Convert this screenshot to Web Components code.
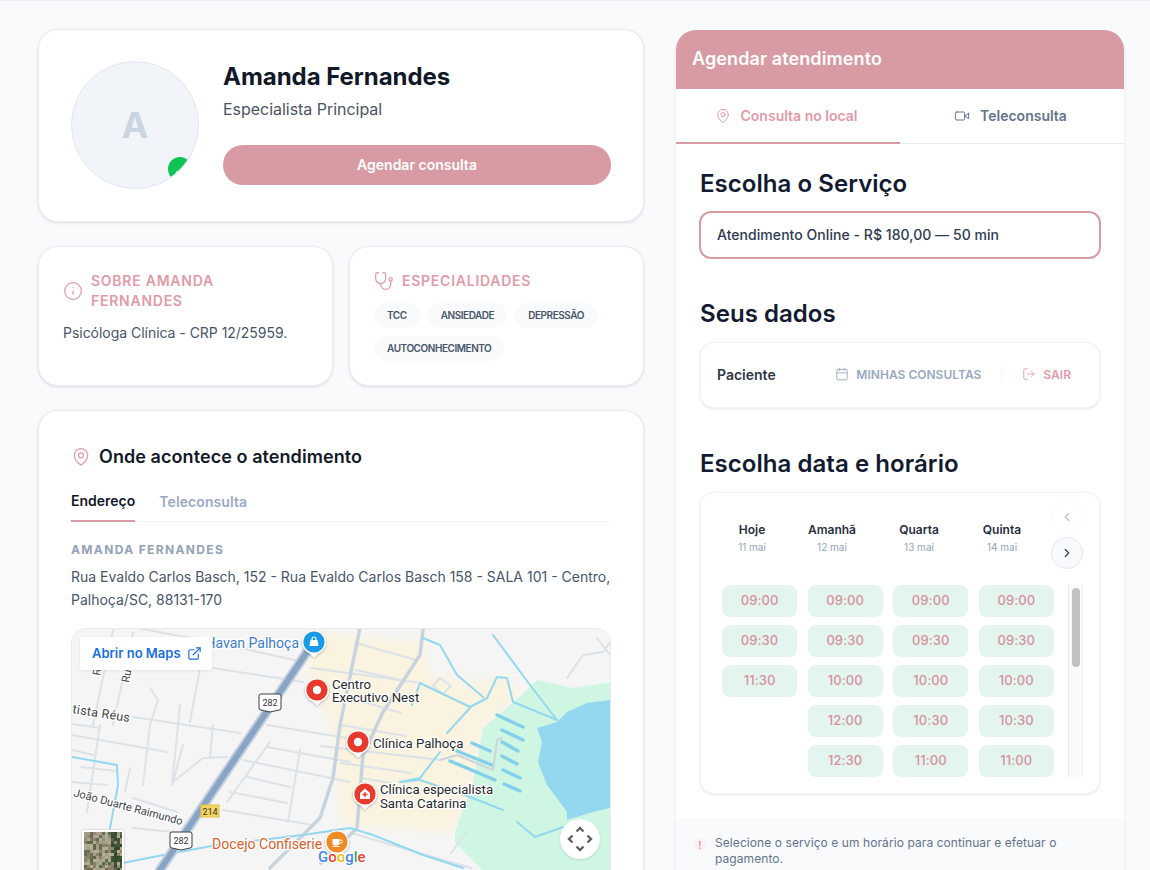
<!DOCTYPE html>
<html lang="pt-BR">
<head>
<meta charset="utf-8">
<title>Amanda Fernandes</title>
<style>
html,body{margin:0;height:870px;overflow:hidden;background:#f8fafc}
body{font-family:Inter,"Liberation Sans",sans-serif;color:#0f172a}
</style>
</head>
<body>
<booking-page>
  <profile-card slot="left" name="Amanda Fernandes" role="Especialista Principal" cta="Agendar consulta"></profile-card>
  <div slot="left" class="row" style="display:grid;grid-template-columns:295px 295px;gap:16px">
    <info-card icon="info" heading="Sobre Amanda Fernandes"><span style="display:block;margin-top:1px;font-size:14px;line-height:20px;color:#475569;letter-spacing:-.03px">Psicóloga Clínica - CRP 12/25959.</span></info-card>
    <info-card icon="stethoscope" heading="Especialidades">
      <tag-list>
        <tag-chip>TCC</tag-chip><tag-chip>ANSIEDADE</tag-chip><tag-chip>DEPRESSÃO</tag-chip><tag-chip>AUTOCONHECIMENTO</tag-chip>
      </tag-list>
    </info-card>
  </div>
  <location-card slot="left"></location-card>
  <schedule-panel slot="right"></schedule-panel>
</booking-page>

<script>
const ICONS={
 pin:'<path d="M20 10c0 6-8 12-8 12s-8-6-8-12a8 8 0 0 1 16 0Z"/><circle cx="12" cy="10" r="3"/>',
 info:'<circle cx="12" cy="12" r="10"/><path d="M12 16v-4"/><path d="M12 8h.01"/>',
 stethoscope:'<path d="M4.8 2.3A.3.3 0 1 0 5 2H4a2 2 0 0 0-2 2v5a6 6 0 0 0 6 6 6 6 0 0 0 6-6V4a2 2 0 0 0-2-2h-1a.2.2 0 1 0 .3.3"/><path d="M8 15v1a6 6 0 0 0 6 6 6 6 0 0 0 6-6v-4"/><circle cx="20" cy="10" r="2"/>',
 video:'<path d="m22 8-6 4 6 4V8Z"/><rect x="2" y="6" width="14" height="12" rx="2"/>',
 calendar:'<rect x="3" y="4" width="18" height="18" rx="2"/><path d="M16 2v4M8 2v4M3 10h18"/>',
 logout:'<path d="M9 21H5a2 2 0 0 1-2-2V5a2 2 0 0 1 2-2h4"/><path d="m16 17 5-5-5-5"/><path d="M21 12H9"/>',
 external:'<path d="M18 13v6a2 2 0 0 1-2 2H5a2 2 0 0 1-2-2V8a2 2 0 0 1 2-2h6"/><path d="M15 3h6v6"/><path d="M10 14 21 3"/>',
 left:'<path d="m15 18-6-6 6-6"/>',
 right:'<path d="m9 18 6-6-6-6"/>'
};
class Base extends HTMLElement{
  constructor(){super();this.attachShadow({mode:'open'});}
  render(html){this.shadowRoot.innerHTML=html;}
}
class UiIcon extends Base{
  connectedCallback(){
    const s=this.getAttribute('size')||16,w=this.getAttribute('stroke')||2;
    this.render(`<style>:host{display:inline-flex;flex:none;width:${s}px;height:${s}px}svg{display:block}</style>
    <svg xmlns="http://www.w3.org/2000/svg" width="${s}" height="${s}" viewBox="0 0 24 24" fill="none" stroke="currentColor" stroke-width="${w}" stroke-linecap="round" stroke-linejoin="round">${ICONS[this.getAttribute('name')]}</svg>`);
  }
}
customElements.define('ui-icon',UiIcon);

class BookingPage extends Base{
  connectedCallback(){this.render(`<style>
   :host{display:block;height:870px;box-sizing:border-box;border-top:1px solid #eef1f5;overflow:hidden}
   .grid{display:grid;grid-template-columns:606px 448px;gap:32px;padding:28px 26px 0 38px;align-items:start}
   .col{display:flex;flex-direction:column;gap:24px;min-width:0}
   .col.r{padding-top:1px}
  </style><div class="grid"><div class="col"><slot name="left"></slot></div><div class="col r"><slot name="right"></slot></div></div>`);}
}
customElements.define('booking-page',BookingPage);

const CARD=`border:1px solid #e9edf2;border-radius:20px;background:#fff;box-shadow:0 1px 3px rgba(15,23,42,.12);box-sizing:border-box;`;
class ProfileCard extends Base{
  connectedCallback(){
    const a=n=>this.getAttribute(n);
    this.render(`<style>
    :host{display:block;${CARD}padding:31px 32px 0;height:193px}
    .wrap{display:flex;gap:24px}
    .avatar{position:relative;width:128px;height:128px;border-radius:50%;background:#f1f5f9;border:1px solid #e2e8f0;box-sizing:border-box;overflow:hidden;display:flex;align-items:center;justify-content:center;font-size:36px;font-weight:700;color:#cbd5e1;flex:none}
    .dot{position:absolute;left:96px;top:95px;width:24px;height:24px;border-radius:50%;background:#0fc455}
    .dot i{position:absolute;left:8px;top:14px;width:2px;height:3px;background:#fff;border-radius:1px}
    .info{flex:1;min-width:0}
    h1{margin:0;font-size:24px;line-height:32px;font-weight:700;color:#111827;letter-spacing:-.03px}
    p{margin:6px 0 0;font-size:16px;line-height:21px;color:#4b5563;letter-spacing:-.03px}
    button{display:block;width:100%;height:40px;margin-top:25px;border:0;border-radius:20px;background:#d89ba3;color:#fff;font:600 14px/20px Inter,sans-serif}
    </style><div class="wrap"><div class="avatar">A<span class="dot"><i></i></span></div>
    <div class="info"><h1>${a('name')}</h1><p>${a('role')}</p><button>${a('cta')}</button></div></div>`);
  }
}
customElements.define('profile-card',ProfileCard);

class InfoCard extends Base{
  connectedCallback(){
    this.render(`<style>
    :host{display:block;${CARD}padding:24px;height:140px}
    .h{display:flex;align-items:center;gap:8px;color:#e29aa8;margin-bottom:12px}
    h3{margin:0;max-width:190px;font-size:14px;line-height:20px;font-weight:600;letter-spacing:.75px;text-transform:uppercase}
    </style><div class="h"><ui-icon name="${this.getAttribute('icon')}" size="20" stroke="1.5"></ui-icon><h3>${this.getAttribute('heading')}</h3></div><slot></slot>`);
  }
}
customElements.define('info-card',InfoCard);

class TagList extends Base{
  connectedCallback(){this.render(`<style>:host{display:flex;flex-wrap:wrap;gap:8px}</style><slot></slot>`);}
}
customElements.define('tag-list',TagList);
class TagChip extends Base{
  connectedCallback(){this.render(`<style>:host{display:inline-block;height:25px;line-height:25px;padding:0 13px;border-radius:13px;background:#f8fafc;font-size:10px;font-weight:600;color:#475569;letter-spacing:-.45px}</style><slot></slot>`);}
}
customElements.define('tag-chip',TagChip);

class LocationCard extends Base{
  connectedCallback(){
    this.render(`<style>
    :host{display:block;${CARD}padding:32px;height:520px}
    .t{display:flex;align-items:center;gap:8px}
    h2{margin:0;font-size:18px;line-height:28px;font-weight:600;color:#111827;letter-spacing:.07px}
    ui-icon{color:#e29aa8}
    .tabs{display:flex;gap:24px;border-bottom:1px solid #f1f5f9;margin-top:15px;height:36px;box-sizing:border-box}
    .tab{font-size:14px;line-height:20px;font-weight:600;color:#9ca9c6;padding-top:6px;height:36px;box-sizing:border-box;letter-spacing:.1px}
    .tab.on{color:#111827;border-bottom:2px solid #d89ba3;letter-spacing:0;padding-top:5px}
    .n{margin:20px 0 0;font-size:12px;line-height:16px;font-weight:700;letter-spacing:1.35px;color:#94a3b8;text-transform:uppercase}
    .a{margin:7px 0 0;font-size:14px;line-height:23px;color:#475569;white-space:nowrap}
    map-view{margin-top:17px}
    </style>
    <div class="t"><ui-icon name="pin" size="20" stroke="1.5"></ui-icon><h2>Onde acontece o atendimento</h2></div>
    <div class="tabs"><div class="tab on">Endereço</div><div class="tab">Teleconsulta</div></div>
    <p class="n">Amanda Fernandes</p>
    <p class="a">Rua Evaldo Carlos Basch, 152 - Rua Evaldo Carlos Basch 158 - SALA 101 - Centro,<br>Palhoça/SC, 88131-170</p>
    <map-view></map-view>`);
  }
}
customElements.define('location-card',LocationCard);

class MapView extends Base{
  connectedCallback(){
    const pl=(pts,c,w,extra='')=>`<polyline points="${pts}" fill="none" stroke="${c}" stroke-width="${w}" stroke-linecap="round" stroke-linejoin="round" ${extra}/>`;
    const minor=['62,89 169,105','196,97 276,110','1,96 29,100','1,107 96,124','1,122 22,127','29,97 16,184','42,2 22,97','62,4 42,97','129,40 119,94','79,60 87,72 79,97 72,157','109,77 101,157','142,97 139,129','112,117 102,154 132,130 156,129','196,119 279,134','172,132 279,154','176,149 219,159','159,164 216,175','152,182 242,197','229,122 217,194','199,114 156,174','66,0 142,14 232,34','142,40 232,54','1,154 36,157','62,170 106,184','59,140 54,164','62,200 102,204','10,139 45,143','240,40 350,55','285,15 345,32','285,42 330,52','280,70 330,85','270,97 335,108','270,135 340,145','290,150 320,155','280,205 400,240','395,205 380,225','369,50 380,58 372,66 362,58 369,50','496,50 512,27 532,24 539,14','526,10 539,27','250,118 369,132'];
    const major=['289,0 269,97 262,150 249,190 199,240','352,2 349,27 312,84 292,127 286,200 269,217 250,235'];
    const water=['1,129 46,137 47,157 39,200','52,235 92,227 146,217 232,207 279,200 302,207 352,227 392,240','352,10 369,17 386,47 412,69','349,55 399,79','349,55 341,77','399,79 416,70 426,49 436,50 442,74 486,92','399,80 376,105','422,7 459,57 486,92','369,124 349,150 329,154','329,154 349,152 399,169 432,182','446,194 464,209 492,199'];
    const dash=['426,87 452,99','431,102 452,112','401,115 419,123','431,114 447,123','386,123 421,137','431,128 446,136','379,133 424,152','432,142 449,150','433,156 449,163'];
    const pin=(x,y,fill,inner)=>`<g transform="translate(${x} ${y})"><path d="M0 15.5 -4 11.5 A12 12 0 1 1 4 11.5Z" fill="#fff" filter="url(#ps)"/><circle r="10.6" fill="${fill}"/>${inner}</g>`;
    const label=(x,y,t,c='#26282c',fs=13.2)=>`<text x="${x}" y="${y}" font-size="${fs}" fill="${c}" class="l">${t}</text>`;
    const shield=(x,y,t)=>`<g transform="translate(${x} ${y})"><path d="M-11 -7 Q-11 -9 -9 -9 H9 Q11 -9 11 -7 V5 Q11 7 9 7 L0 9 -9 7 Q-11 7 -11 5Z" fill="#fff" stroke="#3a3f45" stroke-width="1"/><text y="3" font-size="9" text-anchor="middle" fill="#33363a">${t}</text></g>`;
    let sat='';let seed=7;const r=()=>(seed=(seed*9301+49297)%233280)/233280;
    const cols=['#6d6a55','#8f8a74','#8a7f68','#a49d88','#596b47','#b8a98f','#b0aa98'];
    for(let y=0;y<44;y+=3)for(let x=0;x<40;x+=3){const g=x>24&&r()>.35?(r()>.5?'#2f4a2f':'#3f5535'):cols[Math.floor(r()*7)];sat+=`<rect x="${x}" y="${y}" width="3" height="3" fill="${g}"/>`;}
    this.render(`<style>
    :host{display:block;position:relative;height:300px;border-radius:14px;overflow:hidden;background:#f4f5f6;border:1px solid #e8ecf0;box-sizing:border-box}
    svg.m{position:absolute;left:-1px;top:-1px;font-family:Roboto,"Liberation Sans",sans-serif}
    .l{paint-order:stroke;stroke:#fff;stroke-width:2.5px;stroke-linejoin:round}
    .open{position:absolute;left:8px;top:8px;width:132px;height:33px;background:#fff;border-radius:3px;display:flex;align-items:center;gap:6px;padding:0 0 1px 12px;box-sizing:border-box;color:#1a6fdc;font:600 13px/16px Inter,sans-serif;box-shadow:0 1px 3px rgba(0,0,0,.08)}
    .sat{position:absolute;left:10px;top:201px;width:42px;height:46px;border:2px solid #fff;box-sizing:border-box;border-radius:2px;overflow:hidden;box-shadow:0 0 2px rgba(0,0,0,.3)}
    .sat svg{display:block;filter:blur(.7px)}
    .nav{position:absolute;left:488px;top:190px;width:40px;height:40px;border-radius:50%;background:#fff;box-shadow:0 1px 3px rgba(0,0,0,.12)}
    .nav svg{display:block}
    </style>
    <svg class="m" xmlns="http://www.w3.org/2000/svg" width="540" height="300" viewBox="0 0 540 300">
      <defs><filter id="ps" x="-30%" y="-30%" width="160%" height="160%"><feDropShadow dx="0" dy="1" stdDeviation="1" flood-color="#000" flood-opacity=".3"/></filter>
      <filter id="soft" x="-10%" y="-10%" width="120%" height="120%"><feGaussianBlur stdDeviation="4"/></filter></defs>
      <rect width="540" height="300" fill="#f5f5f5"/>
      <polygon points="236,3 352,15 359,47 402,54 436,50 449,64 412,100 402,154 384,204 300,200 270,195 262,100 240,60" fill="#faf3e0" filter="url(#soft)"/>
      <polygon points="466,52 442,75 412,100 402,154 384,204 384,215 419,250 540,250 540,54 502,60" fill="#cff6e3"/>
      <polygon points="539,72 516,75 496,84 486,94 466,100 471,114 467,134 476,157 496,184 496,192 522,184 539,180" fill="#93d8ef"/>
      ${minor.map(p=>pl(p,'#dbe2e8',2)).join('')}
      ${major.map(p=>pl(p,'#c8d3dd',3.5)).join('')}
      ${water.map(p=>pl(p,'#93d8ef',2)).join('')}
      ${dash.map(p=>pl(p,'#82d0ea',3.5)).join('')}
      ${pl('369,132 386,127 422,142 426,112 431,110','#cdd5da',2)}
      ${pl('236,24 89,242','#c3d1de',10)}
      ${pl('236,24 89,242','#8aa4c4',6)}
      ${shield(199,75,'282')}${shield(110,213,'282')}
      <g transform="translate(139 183)"><rect x="-9" y="-6" width="18" height="12" fill="#f6d25e" stroke="#e8c04a"/><text y="3.5" font-size="9" text-anchor="middle" fill="#33363a">214</text></g>
      <text x="228" y="20" text-anchor="end" font-size="14" fill="#3b7ccc" class="l">Havan Palhoça</text>
      <text transform="translate(1 85) rotate(9)" font-size="12.5" fill="#3c4148" class="l" letter-spacing=".3">tista Réus</text>
      <text transform="translate(2 168) rotate(15)" font-size="11" fill="#3c4148" class="l">João Duarte Raimundo</text>
      <text transform="translate(58 55) rotate(-80)" font-size="11" fill="#3c4148" class="l">Rua</text>
      <text transform="translate(29 48) rotate(-80)" font-size="11" fill="#3c4148" class="l">Ru</text>
      ${pin(243,14,'#1a9be8','<path d="M-3.5 -2h7l1 6h-9Z" fill="#fff"/><path d="M-2 -2v-1a2 2 0 0 1 4 0v1" fill="none" stroke="#fff" stroke-width="1.2"/>')}
      ${pin(246,62,'#e8392c','<circle r="4.2" fill="#fff"/>')}
      ${pin(287,114,'#e8392c','<circle r="4.2" fill="#fff"/>')}
      ${pin(294,166,'#e8392c','<path d="M-5 -1 0 -5.5 5 -1V5H-5Z" fill="#fff"/><path d="M0 -2v5M-2.5 .5h5" stroke="#e8392c" stroke-width="1.4"/>')}
      ${pin(266,214,'#f08a24','<path d="M-4.5 -3h7v4a2.5 2.5 0 0 1-2.5 2.5h-2A2.5 2.5 0 0 1-4.5 1Z" fill="#fff"/><path d="M2.5 -2h1.5a1.4 1.4 0 0 1 0 3H2.5" fill="none" stroke="#fff"/><path d="M-4.5 4.5h7" stroke="#fff"/>')}
      ${label(261,61,'Centro')}${label(261,74,'Executivo Nest')}
      ${label(302,120,'Clínica Palhoça')}
      ${label(309,166,'Clínica especialista')}${label(309,180,'Santa Catarina')}
      ${label(141,221,'Docejo Confiserie','#d9622b',14.1)}
      <text x="247" y="234" font-size="15" font-weight="500" class="l"><tspan fill="#4285f4">G</tspan><tspan fill="#ea4335">o</tspan><tspan fill="#fbbc05">o</tspan><tspan fill="#4285f4">g</tspan><tspan fill="#34a853">l</tspan><tspan fill="#ea4335">e</tspan></text>
    </svg>
    <div class="open">Abrir no Maps<ui-icon name="external" size="15" stroke="1.9"></ui-icon></div>
    <div class="sat"><svg width="40" height="44" viewBox="0 0 40 44">${sat}</svg></div>
    <div class="nav"><svg width="40" height="40" viewBox="0 0 40 40" fill="none" stroke="#5f6368" stroke-width="2.4"><path d="M16.5 12.5 20 9l3.5 3.5M16.5 27.5 20 31l3.5-3.5M12.5 16.5 9 20l3.5 3.5M27.5 16.5 31 20l-3.5 3.5"/></svg></div>`);
  }
}
customElements.define('map-view',MapView);

class TimeSlot extends Base{
  connectedCallback(){this.render(`<style>:host{display:flex;align-items:center;justify-content:center;height:32px;padding-bottom:2px;box-sizing:border-box;border-radius:8px;background:#e4f5ef;color:#d4919c;font-size:13px;font-weight:500;letter-spacing:.1px}</style><slot></slot>`);}
}
customElements.define('time-slot',TimeSlot);

class SchedulePanel extends Base{
  connectedCallback(){
    const cols=[
      ['09:00','09:30','11:30'],
      ['09:00','09:30','10:00','12:00','12:30'],
      ['09:00','09:30','10:00','10:30','11:00'],
      ['09:00','09:30','10:00','10:30','11:00']
    ];
    const days=[['Hoje','11 mai'],['Amanhã','12 mai'],['Quarta','13 mai'],['Quinta','14 mai']];
    this.render(`<style>
    :host{display:block;border-radius:20px;overflow:hidden;background:#fff;box-shadow:0 1px 3px rgba(15,23,42,.1);height:900px}
    header{height:59px;background:#d89ba3;color:#fff;font-size:18px;font-weight:600;line-height:57px;padding-left:16px;letter-spacing:.1px}
    .tabs{display:grid;grid-template-columns:224px 224px;height:55px;border-bottom:1px solid #e8ecf1;box-sizing:border-box}
    .tab{display:flex;align-items:center;justify-content:center;gap:10px;font-size:14px;font-weight:600;color:#64748b;height:54px;box-sizing:border-box;padding-bottom:1px;padding-right:3px}
    .tab.on{color:#e29aa8;border-bottom:2px solid #d89ba3;height:55px;padding-bottom:0;padding-right:4px}
    .body{padding:24px}
    h2{margin:0 0 11px;font-size:24px;line-height:32px;font-weight:600;color:#111a30;letter-spacing:.05px}
    section+section{margin-top:39px}
    .select{height:48px;margin:0 -1px;border:2px solid #d89ba3;border-radius:12px;box-sizing:border-box;padding:0 0 1px 16px;display:flex;align-items:center;font-size:14px;font-weight:500;color:#2d3a50;letter-spacing:.05px}
    .pcard{border:1px solid #f1f4f7;border-radius:14px;box-shadow:0 1px 3px rgba(15,23,42,.1);box-sizing:border-box;background:#fff}
    .user{height:66px;display:flex;align-items:center;padding:0 28px 2px 16px;margin-top:12px}
    .user b{font-size:14px;font-weight:600;color:#2d3748;flex:1}
    .act{display:flex;align-items:center;gap:7px;font-size:12px;font-weight:600;color:#9aa8c2;letter-spacing:.02px}
    .sep{width:1px;height:16px;background:#f1f5f9;margin:0 20px 0 20px}
    .act.out{color:#e29aa8}
    .cal{height:302px;margin-top:12px;padding:8px 16px 0 21px;position:relative}
    .head{display:grid;grid-template-columns:60px 100px 74px 92px;height:84px;align-items:start}
    .day{text-align:center;padding-top:21px}
    .day b{display:block;font-size:12px;line-height:16px;font-weight:600;color:#27303f}
    .day span{display:block;font-size:10px;line-height:16px;color:#94a3b8;margin-top:1px}
    .navs{position:absolute;right:16px;top:8px;display:flex;flex-direction:column;gap:4px}
    .navs span{width:32px;height:32px;box-sizing:border-box;border-radius:50%;border:1px solid #e2e8f0;background:#f8fafc;display:flex;align-items:center;justify-content:center;color:#334155}
    .navs span.off{opacity:.45;border-color:#f1f5f9;background:#fff;color:#64748b}
    .scroll{height:192px;display:flex;justify-content:space-between;width:361px}
    .bar{width:15px;height:192px;box-sizing:border-box;background:#fafafa;border-left:1px solid #e8e8e8;border-right:1px solid #efefef;padding:3px 2px 0 3px}
    .bar i{display:block;height:79px;border-radius:4px;background:#c1c1c1}
    .slots{display:grid;grid-template-columns:repeat(4,75.2px);column-gap:10.4px;align-items:start}
    .c{display:flex;flex-direction:column;gap:8px}
    .foot{background:#f8fafc;margin:0;padding:17px 40px 16px 39px;display:flex;gap:8px;font-size:12px;line-height:16px;color:#64748b;letter-spacing:.08px;position:relative}
    .alert{position:absolute;left:17px;top:20px;width:14px;height:14px;border-radius:50%;background:#fdf2f2;color:#f08a94;font-size:10px;line-height:14px;text-align:center;font-weight:600}
    </style>
    <header>Agendar atendimento</header>
    <div class="tabs">
      <div class="tab on"><ui-icon name="pin" size="16" stroke="1.5"></ui-icon>Consulta no local</div>
      <div class="tab"><ui-icon name="video" size="16" stroke="1.5"></ui-icon>Teleconsulta</div>
    </div>
    <div class="body">
      <section><h2>Escolha o Serviço</h2><div class="select">Atendimento Online - R$ 180,00 — 50 min</div></section>
      <section><h2 style="margin:0">Seus dados</h2>
        <div class="pcard user"><b>Paciente</b>
          <span class="act"><ui-icon name="calendar" size="14" stroke="1.5"></ui-icon>MINHAS CONSULTAS</span><i class="sep"></i>
          <span class="act out"><ui-icon name="logout" size="14" stroke="1.5"></ui-icon>SAIR</span>
        </div></section>
      <section style="margin-top:40px"><h2 style="margin:0">Escolha data e horário</h2>
        <div class="pcard cal">
          <div class="head">${days.map(d=>`<div class="day"><b>${d[0]}</b><span>${d[1]}</span></div>`).join('')}</div>
          <div class="navs"><span class="off"><ui-icon name="left" size="14" stroke="2"></ui-icon></span><span><ui-icon name="right" size="14" stroke="2"></ui-icon></span></div>
          <div class="scroll"><div class="slots">${cols.map(c=>`<div class="c">${c.map(t=>`<time-slot>${t}</time-slot>`).join('')}</div>`).join('')}</div><div class="bar"><i></i></div></div>
        </div></section>
    </div>
    <div class="foot"><span class="alert">!</span><span>Selecione o serviço e um horário para continuar e efetuar o pagamento.</span></div>`);
  }
}
customElements.define('schedule-panel',SchedulePanel);
</script>
</body>
</html>
